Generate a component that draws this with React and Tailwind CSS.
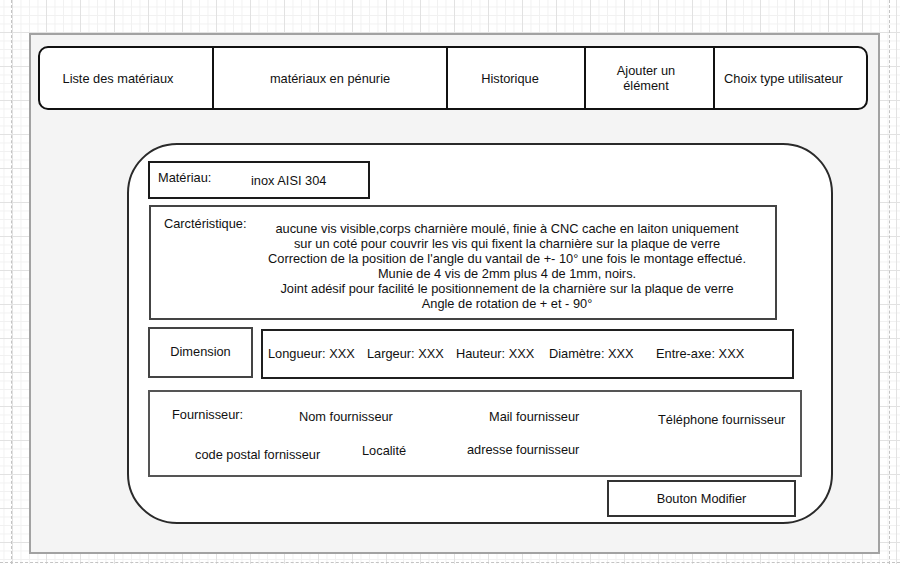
export default function App() {
  const navItems = [
    { label: "Liste des matériaux", w: "w-[172px]", pad: "pr-[16px]" },
    { label: "matériaux en pénurie", w: "w-[234px] border-l-2 border-[#111]", pad: "" },
    { label: "Historique", w: "w-[138px] border-l-2 border-[#111]", pad: "pr-[12px]" },
    { label: "Ajouter un\nélément", w: "w-[129px] border-l-2 border-[#111]", pad: "pr-[7px]" },
    { label: "Choix type utilisateur", w: "flex-1 border-l-2 border-[#111]", pad: "pr-[14px]" },
  ];

  return (
    <div className="relative w-[900px] h-[564px] overflow-hidden bg-white text-[12.8px] text-[#111] font-['Liberation_Sans',Arial,sans-serif] [background-image:linear-gradient(to_right,#e2e2e2_1px,transparent_1px),linear-gradient(to_bottom,#e2e2e2_1px,transparent_1px),linear-gradient(to_right,#f1f1f1_1px,transparent_1px),linear-gradient(to_bottom,#f1f1f1_1px,transparent_1px)] [background-size:34px_34px,34px_34px,8.5px_8.5px,8.5px_8.5px] [background-position:12px_-2px]">
      {/* page borders of the canvas */}
      <div className="absolute left-[11px] top-0 h-full border-l border-dashed border-[#c4c4c4]" />
      <div className="absolute left-[889px] top-0 h-full border-l border-dashed border-[#c4c4c4]" />
      <div className="absolute left-0 top-[562px] w-full border-t border-dashed border-[#c4c4c4]" />

      <div className="relative pl-[29px] pt-[33px]">
        <div className="w-[851px] h-[521px] box-border border-2 border-[#a2a2a2] bg-[#f4f4f4]">
          {/* ── Nav ── */}
          <nav className="ml-[7px] mt-[11px] w-[830px] h-[64px] box-border border-2 border-[#111] rounded-[10px] bg-white flex">
            {navItems.map(item => (
              <div
                key={item.label}
                className={`${item.w} ${item.pad} h-full box-border flex items-center justify-center text-center leading-[15px] whitespace-pre-line`}
              >
                {item.label}
              </div>
            ))}
          </nav>

          {/* ── Fiche matériau ── */}
          <div className="ml-[96px] mt-[33px] w-[706px] h-[381px] box-border border-2 border-[#2a2a2a] rounded-[50px] bg-white">
            <div className="ml-[19px] mt-[16px] w-[222px] h-[38px] box-border border-2 border-[#1a1a1a] flex leading-[14px]">
              <span className="ml-[8px] w-[93px] pt-[8px]">Matériau:</span>
              <span className="pt-[11px]">inox AISI 304</span>
            </div>

            <div className="ml-[20px] mt-[6px] w-[628px] h-[115px] box-border border-2 border-[#444] flex leading-[15px]">
              <span className="ml-[13px] w-[103px] pt-[9px]">Carctéristique:</span>
              <p className="w-[480px] pt-[14px] text-center whitespace-nowrap">
                aucune vis visible,corps charnière moulé, finie à CNC cache en laiton uniquement<br />
                sur un coté pour couvrir les vis qui fixent la charnière sur la plaque de verre<br />
                Correction de la position de l'angle du vantail de +- 10° une fois le montage effectué.<br />
                Munie de 4 vis de 2mm plus 4 de 1mm, noirs.<br />
                Joint adésif pour facilité le positionnement de la charnière sur la plaque de verre<br />
                Angle de rotation de + et - 90°
              </p>
            </div>

            <div className="mt-[7px] flex items-start">
              <div className="ml-[19px] w-[105px] h-[51px] box-border border-2 border-[#444] flex items-center justify-center pb-[2px]">
                Dimension
              </div>
              <div className="ml-[8px] mt-[2px] w-[533px] h-[50px] box-border border-2 border-[#1f1f1f] flex items-center pl-[5px] whitespace-nowrap">
                <span className="w-[99px]">Longueur: XXX</span>
                <span className="w-[89px]">Largeur: XXX</span>
                <span className="w-[93px]">Hauteur: XXX</span>
                <span className="w-[107px]">Diamètre: XXX</span>
                <span>Entre-axe: XXX</span>
              </div>
            </div>

            <div className="ml-[19px] mt-[11px] w-[654px] h-[87px] box-border border-2 border-[#555] leading-[14px] whitespace-nowrap">
              <div className="flex items-start pl-[22px] pt-[16px]">
                <span className="w-[127px]">Fournisseur:</span>
                <span className="w-[190px] mt-[2px]">Nom fournisseur</span>
                <span className="w-[169px] mt-[2px]">Mail fournisseur</span>
                <span className="mt-[5px]">Téléphone fournisseur</span>
              </div>
              <div className="flex items-start pl-[45px] mt-[15px]">
                <span className="w-[167px] mt-[6px]">code postal fornisseur</span>
                <span className="w-[105px] mt-[2px]">Localité</span>
                <span className="mt-[1px]">adresse fournisseur</span>
              </div>
            </div>

            <button className="ml-[478px] mt-[3px] w-[189px] h-[37px] box-border border-2 border-[#333] bg-white flex items-center justify-center">
              Bouton Modifier
            </button>
          </div>
        </div>
      </div>
    </div>
  );
}
